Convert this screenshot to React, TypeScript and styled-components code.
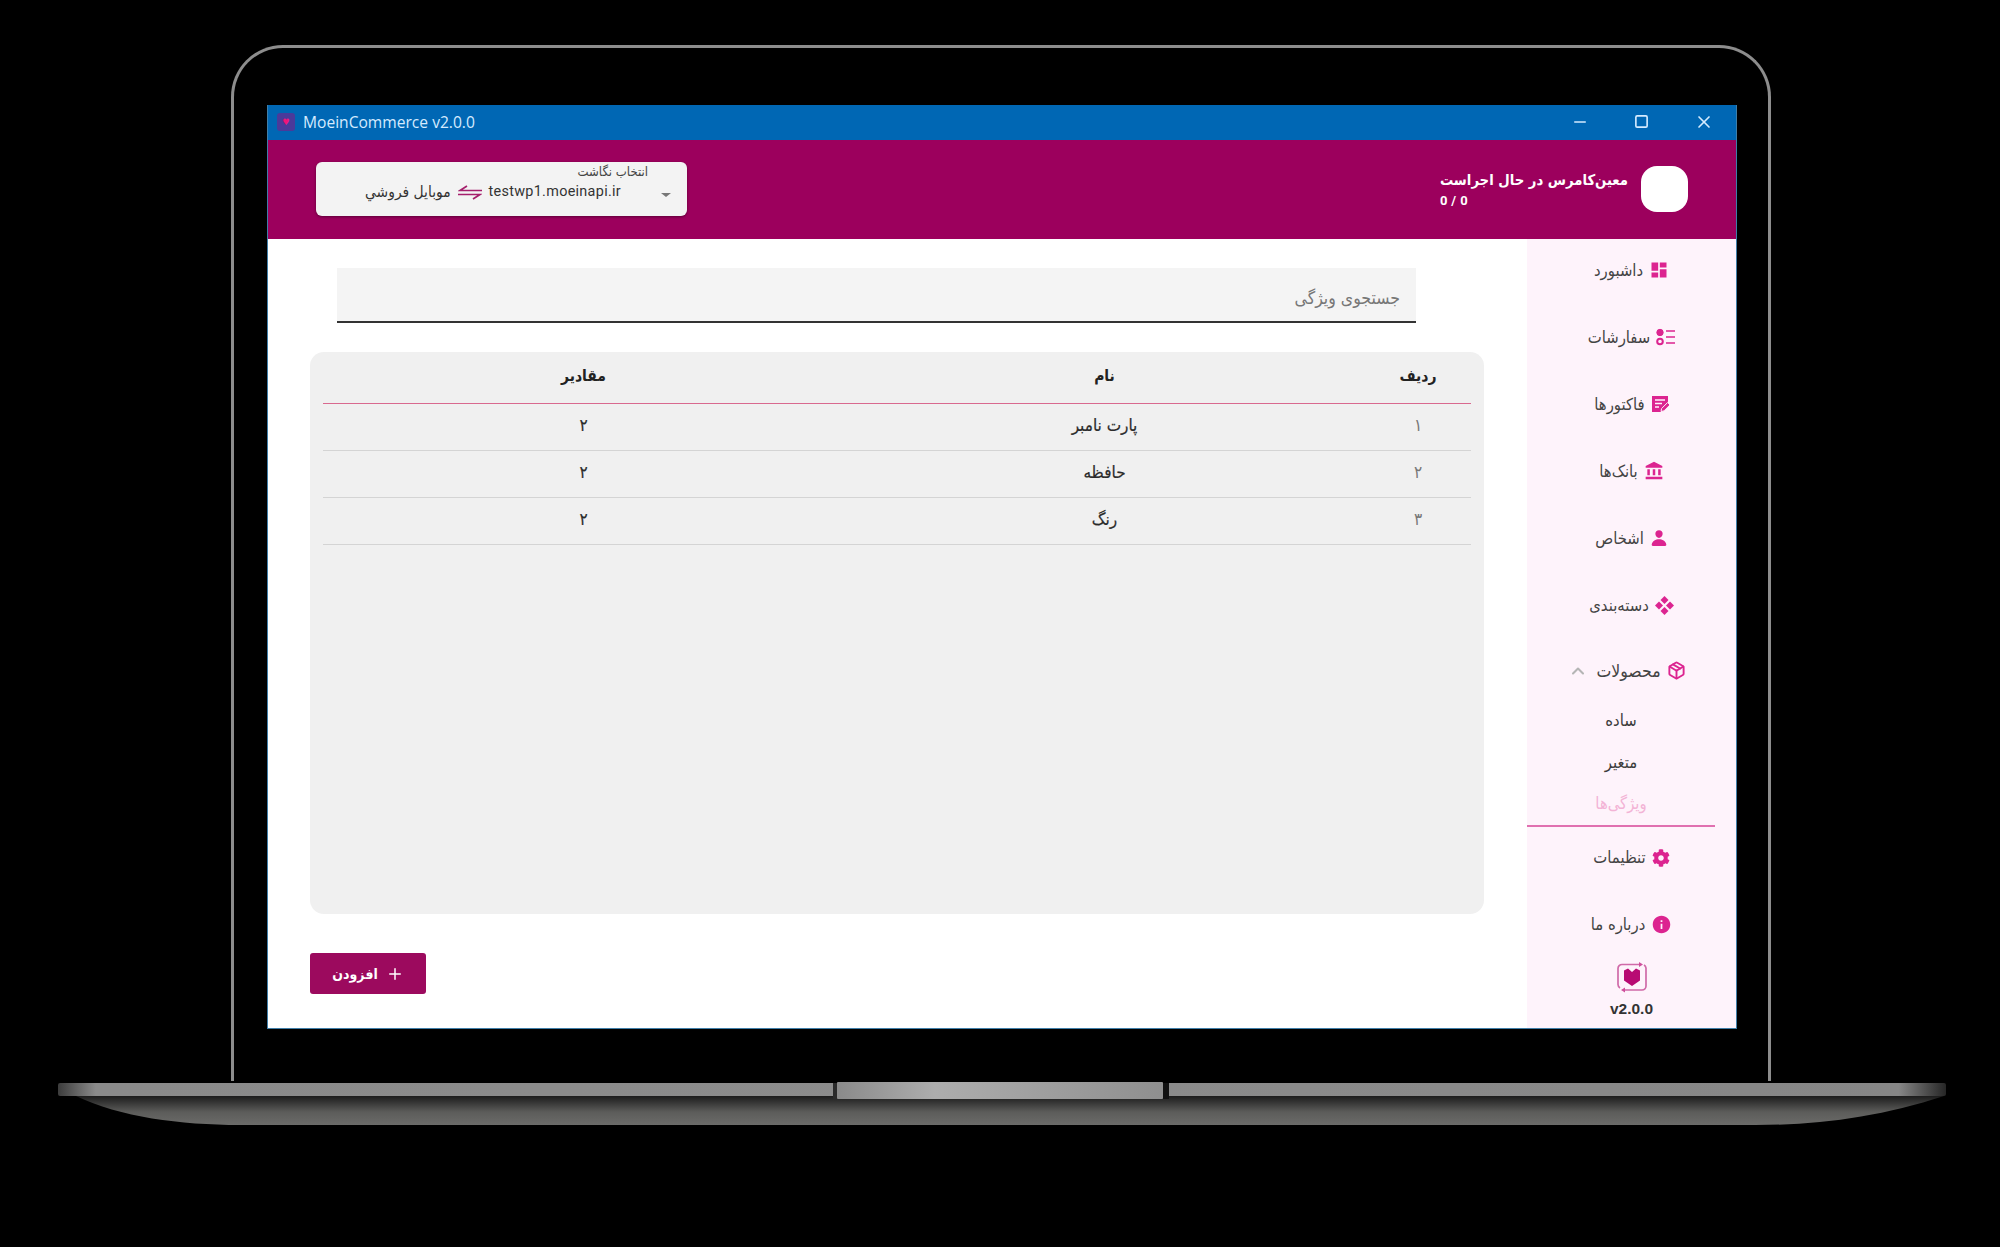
import styled, { createGlobalStyle } from 'styled-components';
import { LuChevronUp, LuPackage, LuPlus, LuX, LuMinus, LuSquare } from 'react-icons/lu';
import { MdDashboard, MdAccountBalance, MdInfo } from 'react-icons/md';
import { IoPerson } from 'react-icons/io5';
import { FaCog } from 'react-icons/fa';

const GlobalStyle = createGlobalStyle`
  html, body {
    margin: 0;
    padding: 0;
    background: #000;
    font-family: 'DejaVu Sans Condensed', 'DejaVu Sans', 'Noto Sans', sans-serif;
  }
  * { box-sizing: border-box; }
`;

const Stage = styled.div`
  width: 2000px;
  height: 1247px;
  padding-top: 45px;
  background: #000;
  overflow: hidden;
`;

const Lid = styled.div`
  width: 1540px;
  height: 1036px;
  margin-left: 231px;
  padding: 57px 31px 0 33px;
  border: 3px solid #8d8d8d;
  border-bottom: none;
  border-radius: 52px 52px 0 0;
`;

const Window = styled.div`
  display: flex;
  flex-direction: column;
  width: 1470px;
  height: 924px;
  background: #fff;
  border: 1px solid #3f7ea8;
  border-top: none;
`;

const TitleBar = styled.div`
  display: flex;
  align-items: center;
  height: 35px;
  flex: none;
  padding: 0 0 2px 9px;
  background: #0067b4;
  color: #d5ebff;
`;

const AppBadge = styled.span`
  display: flex;
  align-items: center;
  justify-content: center;
  width: 18px;
  height: 18px;
  border-radius: 3px;
  background: #4a3a9a;
  color: #f0157a;
  font-size: 9px;
`;

const AppTitle = styled.span`
  margin-left: 8px;
  font-family: 'Open Sans', sans-serif;
  font-size: 15.6px;
`;

const Controls = styled.div`
  display: flex;
  align-items: center;
  gap: 45px;
  margin-left: auto;
  padding-right: 22px;
  color: #d5ebff;
`;

const Header = styled.header`
  display: flex;
  align-items: center;
  justify-content: space-between;
  flex: none;
  height: 99px;
  padding: 0 48px 2px 48px;
  background: #9c005d;
`;

const Picker = styled.div`
  display: flex;
  flex-direction: column;
  position: relative;
  width: 371px;
  height: 54px;
  padding: 2px 39px 0 0;
  border-radius: 6px;
  background: #f3f3f3;
  box-shadow: 0 1px 3px rgba(0, 0, 0, 0.4);
  color: #333;
`;

const PickerLabel = styled.span`
  direction: rtl;
  font-size: 13px;
  line-height: 16px;
  color: #444;
`;

const PickerValue = styled.div`
  display: flex;
  align-items: center;
  justify-content: flex-end;
  gap: 7px;
  height: 24px;
  padding-right: 27px;
  font-size: 15.4px;
`;

const Domain = styled.span`
  font-family: 'Roboto', sans-serif;
  font-size: 14.4px;
  letter-spacing: 0.3px;
`;

const Caret = styled.span`
  position: absolute;
  right: 16px;
  top: 31px;
  border-left: 5px solid transparent;
  border-right: 5px solid transparent;
  border-top: 4px solid #777;
`;

const Status = styled.div`
  display: flex;
  align-items: center;
  gap: 13px;
  color: #fff;
`;

const StatusText = styled.div`
  display: flex;
  flex-direction: column;
  gap: 3px;
  padding-top: 2px;
`;

const StatusTitle = styled.span`
  direction: rtl;
  font-size: 14.7px;
  font-weight: 700;
  line-height: 20px;
`;

const StatusCount = styled.span`
  font-family: 'Roboto', sans-serif;
  font-size: 13px;
  font-weight: 700;
  letter-spacing: 0.4px;
  line-height: 16px;
`;

const Avatar = styled.div`
  width: 47px;
  height: 46px;
  border-radius: 16px;
  background: #fff;
`;

const Body = styled.div`
  display: flex;
  flex: 1;
  min-height: 0;
`;

const Main = styled.main`
  display: flex;
  flex-direction: column;
  align-items: flex-start;
  flex: 1;
  padding: 29px 41px 0 42px;
`;

const Search = styled.div`
  width: 1079px;
  height: 55px;
  margin-left: 27px;
  padding: 19px 16px 0 0;
  direction: rtl;
  background: #f4f4f4;
  border-bottom: 2px solid #333;
  font-size: 17.5px;
  line-height: 22px;
  color: #777;
`;

const Panel = styled.section`
  width: 1174px;
  height: 562px;
  margin-top: 29px;
  padding: 0 13px;
  border-radius: 14px;
  background: #f0f0f0;
`;

const Table = styled.table`
  width: 100%;
  direction: rtl;
  table-layout: fixed;
  border-collapse: collapse;
`;

const HeadCell = styled.th<{ $wide?: boolean }>`
  width: ${(p) => (p.$wide ? 'auto' : '106px')};
  height: 51px;
  padding: 0 0 2px;
  border-bottom: 1.5px solid #d9698f;
  font-size: 15.5px;
  font-weight: 600;
  color: #222;
`;

const Cell = styled.td<{ $muted?: boolean }>`
  height: 47px;
  padding: 0 0 3px;
  border-bottom: 1.5px solid #d4d4d4;
  text-align: center;
  font-size: 17px;
  -webkit-text-stroke: ${(p) => (p.$muted ? '0' : '0.2px')};
  color: ${(p) => (p.$muted ? '#777' : '#2b2b2b')};
`;

const AddButton = styled.button`
  display: flex;
  align-items: center;
  justify-content: center;
  gap: 8px;
  width: 116px;
  height: 41px;
  margin-top: 39px;
  border: none;
  border-radius: 3px;
  background: #9c0a5e;
  color: #fff;
  direction: rtl;
  font-family: inherit;
  font-size: 14px;
  font-weight: 700;
`;

const Sidebar = styled.aside`
  display: flex;
  flex-direction: column;
  flex: none;
  width: 209px;
  background: #fef3fb;
`;

const NavItem = styled.div<{ $short?: boolean }>`
  display: flex;
  align-items: center;
  justify-content: center;
  gap: 6px;
  flex: none;
  height: ${(p) => (p.$short ? '59px' : '67px')};
  padding-bottom: ${(p) => (p.$short ? '0' : '5px')};
  padding-right: ${(p) => (p.$short ? '9px' : '0')};
  font-size: 16.5px;
  color: #444;
  direction: rtl;

  svg {
    flex: none;
    color: #dc2490;
  }
`;

const ProductLabel = styled.span`
  font-size: 17.5px;
`;

const Chevron = styled.span`
  display: flex;
  margin-right: 2px;

  svg {
    color: #b5b5b5;
  }
`;

const SubMenu = styled.div`
  display: flex;
  flex-direction: column;
  flex: none;
  width: 188px;
  border-bottom: 2px solid #e070b0;
`;

const SubLink = styled.div<{ $active?: boolean }>`
  display: flex;
  align-items: center;
  justify-content: center;
  height: 41.5px;
  direction: rtl;
  font-size: 16.5px;
  color: ${(p) => (p.$active ? '#f3b4d6' : '#3c3c3c')};
`;

const Brand = styled.div`
  display: flex;
  flex-direction: column;
  align-items: center;
  gap: 7px;
  margin-top: 1px;
`;

const Version = styled.span`
  font-family: 'Liberation Sans', sans-serif;
  font-size: 15.5px;
  font-weight: 700;
  color: #333;
`;

const Base = styled.svg`
  display: block;
  width: 2000px;
  height: 46px;
`;

const InvoiceIcon = () => (
  <svg width="18" height="18" viewBox="0 0 18 18">
    <path fill="currentColor" d="M1 1h16v9l-7 7H1z" />
    <path stroke="#fef3fb" strokeWidth="1.6" d="M4 5h10M4 8.5h7M4 12h4" />
    <path fill="currentColor" stroke="#fef3fb" strokeWidth="1" d="M10 16.5l.6-3 6-6 2.4 2.4-6 6z" />
  </svg>
);

const OrdersIcon = () => (
  <svg width="19" height="18" viewBox="0 0 19 18" fill="none" stroke="currentColor">
    <circle cx="4" cy="4.500" r="3.2" fill="currentColor" />
    <circle cx="4" cy="13.500" r="2.800" strokeWidth="2" />
    <path strokeWidth="1.6" d="M10 3h9M10 9h9M10 15h9" />
  </svg>
);

const CategoryIcon = () => (
  <svg width="19" height="19" viewBox="0 0 19 19" fill="currentColor">
    <path d="M9.500 0l4 4-4 4-4-4zM4 5.500l4 4-4 4-4-4zM15 5.500l4 4-4 4-4-4zM9.500 11l4 4-4 4-4-4z" />
  </svg>
);

const SwapIcon = () => (
  <svg width="24" height="16" viewBox="0 0 24 16" fill="none" stroke="#a51f6c" strokeWidth="1.7">
    <path d="M24 6.500H2L9 2" />
    <path d="M0 10.500h22L15 15" />
  </svg>
);

const LogoIcon = () => (
  <svg width="32" height="31" viewBox="0 0 32 31" fill="none">
    <path stroke="#d06aa8" strokeWidth="1.7" d="M24 2.500H6a4 4 0 0 0-4 4v16a4 4 0 0 0 2 3.400M8 28h18a4 4 0 0 0 4-4V6a4 4 0 0 0-2-3" />
    <path fill="#cf4f9c" d="M23 0l4 2.500-4 2.500zM9 25.500L5 28l4 2.500z" />
    <path fill="#b80b73" d="M8 8.500l4-2 4 3.500 4-3.500 4 2v10l-8 5.500-8-5.500z" />
  </svg>
);

const rows = [
  { id: '۱', name: 'پارت نامبر' },
  { id: '۲', name: 'حافظه' },
  { id: '۳', name: 'رنگ' },
];

const App = () => (
  <>
    <GlobalStyle />
    <Stage>
      <Lid>
        <Window>
          <TitleBar>
            <AppBadge>♥</AppBadge>
            <AppTitle>MoeinCommerce v2.0.0</AppTitle>
            <Controls>
              <LuMinus size={18} />
              <LuSquare size={15} strokeWidth={2.6} />
              <LuX size={20} />
            </Controls>
          </TitleBar>
          <Header>
            <Picker>
              <PickerLabel>انتخاب نگاشت</PickerLabel>
              <PickerValue>
                <span dir="rtl">موبایل فروشي</span>
                <SwapIcon />
                <Domain>testwp1.moeinapi.ir</Domain>
              </PickerValue>
              <Caret />
            </Picker>
            <Status>
              <StatusText>
                <StatusTitle>معین‌کامرس در حال اجراست</StatusTitle>
                <StatusCount>0 / 0</StatusCount>
              </StatusText>
              <Avatar />
            </Status>
          </Header>
          <Body>
            <Main>
              <Search>جستجوی ویژگی</Search>
              <Panel>
                <Table>
                  <thead>
                    <tr>
                      <HeadCell>ردیف</HeadCell>
                      <HeadCell $wide>نام</HeadCell>
                      <HeadCell $wide>مقادیر</HeadCell>
                    </tr>
                  </thead>
                  <tbody>
                    {rows.map((row) => (
                      <tr key={row.id}>
                        <Cell $muted>{row.id}</Cell>
                        <Cell>{row.name}</Cell>
                        <Cell>۲</Cell>
                      </tr>
                    ))}
                  </tbody>
                </Table>
              </Panel>
              <AddButton>
                <LuPlus size={18} />
                افزودن
              </AddButton>
            </Main>
            <Sidebar>
              <NavItem><MdDashboard size={20} />داشبورد</NavItem>
              <NavItem><OrdersIcon />سفارشات</NavItem>
              <NavItem><InvoiceIcon />فاکتورها</NavItem>
              <NavItem><MdAccountBalance size={20} />بانک‌ها</NavItem>
              <NavItem><IoPerson size={18} />اشخاص</NavItem>
              <NavItem><CategoryIcon />دسته‌بندی</NavItem>
              <NavItem $short>
                <LuPackage size={19} strokeWidth={2.4} />
                <ProductLabel>محصولات</ProductLabel>
                <Chevron><LuChevronUp size={20} strokeWidth={2.5} /></Chevron>
              </NavItem>
              <SubMenu>
                <SubLink>ساده</SubLink>
                <SubLink>متغیر</SubLink>
                <SubLink $active>ویژگی‌ها</SubLink>
              </SubMenu>
              <NavItem><FaCog size={18} />تنظیمات</NavItem>
              <NavItem><MdInfo size={21} />درباره ما</NavItem>
              <Brand>
                <LogoIcon />
                <Version>v2.0.0</Version>
              </Brand>
            </Sidebar>
          </Body>
        </Window>
      </Lid>
      <Base viewBox="0 0 2000 46">
        <defs>
          <linearGradient id="underside" x1="0" y1="0" x2="0" y2="1">
            <stop offset="0" stopColor="#1c1c1c" />
            <stop offset="0.55" stopColor="#5c5c5a" />
            <stop offset="1" stopColor="#6b6b69" />
          </linearGradient>
          <linearGradient id="strip" x1="0" y1="0" x2="1" y2="0">
            <stop offset="0" stopColor="#3c3c3c" />
            <stop offset="0.02" stopColor="#8a8a8a" />
            <stop offset="0.5" stopColor="#8c8c8c" />
            <stop offset="0.975" stopColor="#868686" />
            <stop offset="1" stopColor="#262626" />
          </linearGradient>
          <linearGradient id="notch" x1="0" y1="0" x2="1" y2="0">
            <stop offset="0" stopColor="#8a8a8a" />
            <stop offset="0.3" stopColor="#adadad" />
            <stop offset="1" stopColor="#8f8f8f" />
          </linearGradient>
        </defs>
        <path fill="url(#underside)" d="M76 15C120 36 180 44 240 44H1755C1820 44 1880 36 1944 15z" />
        <rect x="58" y="2" width="1888" height="13" rx="2" fill="url(#strip)" />
        <rect x="833" y="2" width="4" height="16" fill="#2a2a2a" />
        <rect x="1163" y="2" width="6" height="16" fill="#111" />
        <rect x="837" y="1" width="326" height="17" rx="1" fill="url(#notch)" />
      </Base>
    </Stage>
  </>
);

export default App;
